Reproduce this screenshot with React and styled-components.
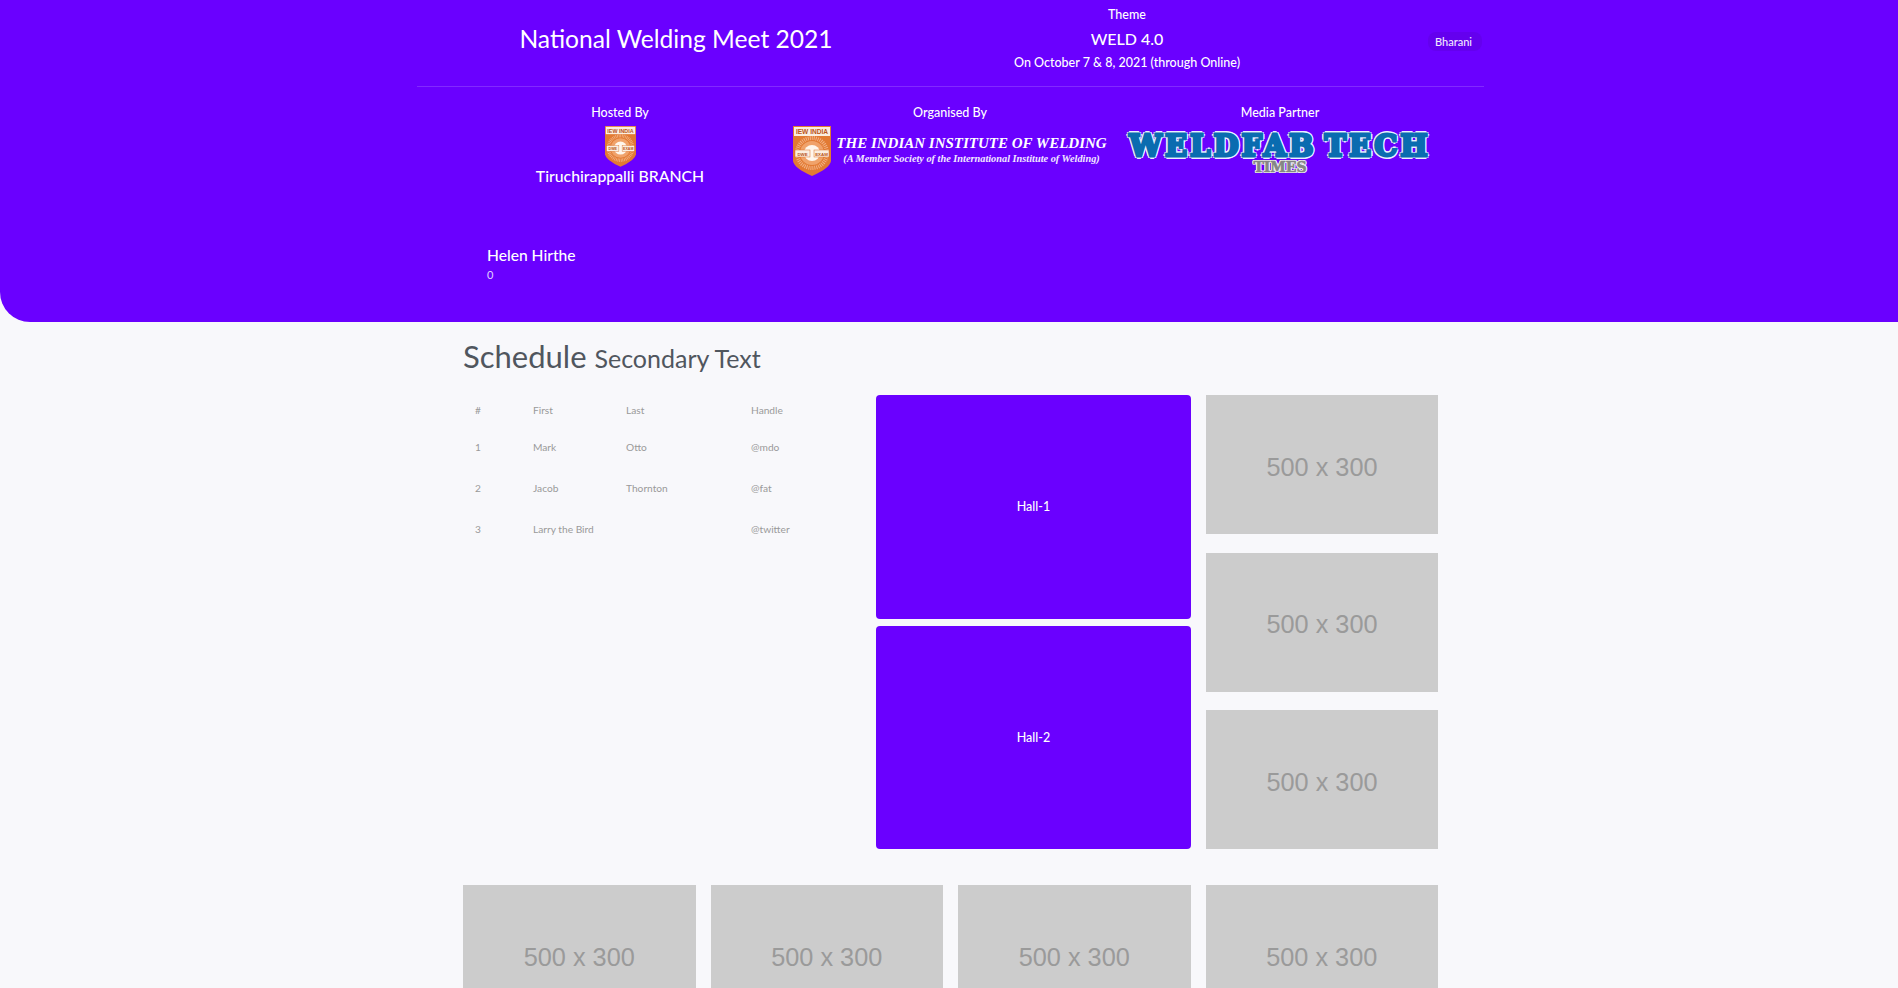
import React from 'react';
import styled, { createGlobalStyle } from 'styled-components';

const GlobalStyle = createGlobalStyle`
  html, body {
    margin: 0;
    padding: 0;
    background: #f8f8fb;
    font-family: "Lato", "Open Sans", sans-serif;
  }
  ::-webkit-scrollbar {
    display: none;
  }
`;

const Header = styled.header`
  height: 322px;
  box-sizing: border-box;
  background: #6a00ff;
  border-bottom-left-radius: 30px;
  color: #fff;
`;

const HeaderInner = styled.div`
  width: 1067px;
  margin-left: 417px;
`;

const TopRow = styled.div`
  display: grid;
  grid-template-columns: 518px 384px 1fr;
  align-items: center;
  height: 86px;
  box-sizing: content-box;
  border-bottom: 1px solid rgba(255, 255, 255, 0.16);
`;

const Title = styled.h1`
  margin: -9px 0 0;
  text-align: center;
  font-size: 24.6px;
  font-weight: 400;
`;

const Theme = styled.div`
  display: flex;
  flex-direction: column;
  align-items: center;
  gap: 6px;
  margin-top: -10px;
  font-size: 12.5px;
  line-height: 17px;
  font-weight: 500;
`;

const ThemeName = styled.div`
  font-size: 16px;
  line-height: 19px;
`;

const UserWrap = styled.div`
  display: flex;
  justify-content: flex-end;
  padding-right: 2px;
  margin-top: -3px;
`;

const UserPill = styled.div`
  padding: 2px 10px 2px 7px;
  border-radius: 8px;
  background: #6400ee;
  font-size: 11px;
  line-height: 15px;
  font-weight: 500;
  color: #f2e9ff;
`;

const SponsorRow = styled.div`
  display: grid;
  grid-template-columns: 406px 254px 406px;
  padding-top: 17px;
`;

const Sponsor = styled.div`
  display: flex;
  flex-direction: column;
  align-items: center;
  font-size: 12.5px;
  line-height: 17px;
  font-weight: 500;
`;

const Logo = styled.div`
  display: flex;
  align-items: flex-start;
  margin-top: 5px;
`;

const Branch = styled.div`
  font-size: 15.8px;
  line-height: 20px;
  margin-top: -1px;
`;

const InstituteText = styled.div`
  display: flex;
  flex-direction: column;
  align-items: center;
  padding: 8px 0 0 5px;
  font-family: "Liberation Serif", serif;
  font-style: italic;
  font-weight: 700;
  white-space: nowrap;
`;

const InstituteName = styled.div`
  font-size: 15px;
  line-height: 19px;
`;

const InstituteNote = styled.div`
  font-size: 10.3px;
  line-height: 12px;
  color: #f3e8ff;
`;

const Weldfab = styled.div`
  display: flex;
  flex-direction: column;
  align-items: center;
  margin-top: 5px;
  font-family: "DejaVu Serif", serif;
  font-weight: 700;
  white-space: nowrap;
`;

const WeldfabName = styled.div`
  font-size: 29px;
  line-height: 30px;
  color: #0a6cb0;
  letter-spacing: 3px;
  word-spacing: -5px;
  -webkit-text-stroke: 2.8px #0a6cb0;
  text-shadow: 2.8px 0 #e8f2ff, -2.8px 0 #e8f2ff, 0 2.8px #e8f2ff, 0 -2.8px #e8f2ff, 2px 2px #e8f2ff, -2px 2px #e8f2ff, 2px -2px #e8f2ff, -2px -2px #e8f2ff;
`;

const WeldfabTimes = styled.div`
  font-size: 14px;
  line-height: 12px;
  color: #858585;
  -webkit-text-stroke: 0.6px #858585;
  text-shadow: 1.2px 0 #f2f2f2, -1.2px 0 #f2f2f2, 0 1.2px #f2f2f2, 0 -1.2px #f2f2f2, 1px 1px #f2f2f2, -1px -1px #f2f2f2, 1px -1px #f2f2f2, -1px 1px #f2f2f2;
`;

const Person = styled.div`
  margin-top: 58px;
  padding-left: 70px;
`;

const PersonName = styled.div`
  font-size: 15.6px;
  line-height: 22px;
  font-weight: 500;
`;

const PersonCount = styled.div`
  font-size: 11px;
  line-height: 15px;
  margin-top: 1px;
  color: #e3d0ff;
`;

const Main = styled.main`
  width: 975px;
  margin-left: 463px;
  padding-top: 14px;
`;

const Heading = styled.h2`
  margin: 0 0 16px;
  font-size: 31px;
  line-height: 41px;
  font-weight: 400;
  color: #50565e;
`;

const HeadingNote = styled.small`
  font-size: 25px;
  font-weight: 400;
`;

const TopGrid = styled.div`
  display: grid;
  grid-template-columns: 398px 315px 232px;
  column-gap: 15px;
`;

const Table = styled.table`
  width: 100%;
  height: 154px;
  border-collapse: collapse;
  table-layout: fixed;
  font-size: 10.2px;
  color: #9a9a9a;
`;

const HeadCell = styled.th`
  width: ${(p) => p.$width || 'auto'};
  height: 32px;
  padding: 0 0 2px 12px;
  box-sizing: border-box;
  text-align: left;
  font-weight: 400;
`;

const Cell = styled.td`
  height: 40px;
  padding: 0 0 0 12px;
`;

const HallStack = styled.div`
  display: flex;
  flex-direction: column;
  gap: 7px;
`;

const Hall = styled.div`
  display: flex;
  align-items: center;
  justify-content: center;
  height: 223.5px;
  border-radius: 4px;
  background: #6a00ff;
  color: #fff;
  font-size: 12.5px;
  font-weight: 500;
`;

const PlaceholderStack = styled.div`
  display: flex;
  flex-direction: column;
  justify-content: space-between;
`;

const Placeholder = styled.div`
  display: flex;
  align-items: center;
  justify-content: center;
  height: 139px;
  box-sizing: border-box;
  padding-top: 5px;
  background: #ccc;
  color: #9a9a9a;
  font-family: "Liberation Sans", Arial, sans-serif;
  font-size: 25.3px;
`;

const BottomGrid = styled.div`
  display: grid;
  grid-template-columns: repeat(4, 1fr);
  column-gap: 15px;
  margin-top: 36px;
`;

// shield crest used in both the hosted by and the organised by logos
function Shield({ width }) {
  return (
    <svg width={width} height={(width * 50) / 38} viewBox="0 0 38 50">
      <path d="M0 0H38V35Q37 42 19 50Q1 42 0 35Z" fill="#e27a33" />
      <rect x="1" y="1" width="36" height="9" fill="#fbeee0" />
      <text x="19" y="8" textAnchor="middle" fontSize="6.6" fontWeight="700" fontFamily="Liberation Sans, sans-serif" fill="#b9541a">
        IEW INDIA
      </text>
      <circle cx="19" cy="27" r="15" fill="none" stroke="#f2b184" strokeWidth="4" strokeDasharray="1 1" />
      <circle cx="19" cy="27" r="12" fill="#f0a26a" />
      <circle cx="19" cy="27" r="8" fill="#fff6ec" />
      <rect x="2" y="24" width="15" height="7" fill="#fbeee0" stroke="#d96f2b" strokeWidth="0.5" />
      <rect x="21" y="24" width="15" height="7" fill="#fbeee0" stroke="#d96f2b" strokeWidth="0.5" />
      <text x="9.5" y="29.6" textAnchor="middle" fontSize="4.4" fontWeight="700" fontFamily="Liberation Sans, sans-serif" fill="#b9541a">
        DWE
      </text>
      <text x="28.5" y="29.6" textAnchor="middle" fontSize="4.4" fontWeight="700" fontFamily="Liberation Sans, sans-serif" fill="#b9541a">
        EXAM
      </text>
    </svg>
  );
}

const rows = [
  ['1', 'Mark', 'Otto', '@mdo'],
  ['2', 'Jacob', 'Thornton', '@fat'],
  ['3', 'Larry the Bird', '', '@twitter'],
];

export default function App() {
  return (
    <>
      <GlobalStyle />
      <Header>
        <HeaderInner>
          <TopRow>
            <Title>National Welding Meet 2021</Title>
            <Theme>
              <div>Theme</div>
              <ThemeName>WELD 4.0</ThemeName>
              <div>On October 7 &amp; 8, 2021 (through Online)</div>
            </Theme>
            <UserWrap>
              <UserPill>Bharani</UserPill>
            </UserWrap>
          </TopRow>
          <SponsorRow>
            <Sponsor>
              <div>Hosted By</div>
              <Logo>
                <Shield width={31} />
              </Logo>
              <Branch>Tiruchirappalli BRANCH</Branch>
            </Sponsor>
            <Sponsor>
              <div>Organised By</div>
              <Logo>
                <Shield width={38} />
                <InstituteText>
                  <InstituteName>THE INDIAN INSTITUTE OF WELDING</InstituteName>
                  <InstituteNote>(A Member Society of the International Institute of Welding)</InstituteNote>
                </InstituteText>
              </Logo>
            </Sponsor>
            <Sponsor>
              <div>Media Partner</div>
              <Logo>
                <Weldfab>
                  <WeldfabName>WELDFAB TECH</WeldfabName>
                  <WeldfabTimes>TIMES</WeldfabTimes>
                </Weldfab>
              </Logo>
            </Sponsor>
          </SponsorRow>
          <Person>
            <PersonName>Helen Hirthe</PersonName>
            <PersonCount>0</PersonCount>
          </Person>
        </HeaderInner>
      </Header>
      <Main>
        <Heading>
          Schedule <HeadingNote>Secondary Text</HeadingNote>
        </Heading>
        <TopGrid>
          <div>
            <Table>
              <thead>
                <tr>
                  <HeadCell $width="58px">#</HeadCell>
                  <HeadCell $width="93px">First</HeadCell>
                  <HeadCell $width="125px">Last</HeadCell>
                  <HeadCell>Handle</HeadCell>
                </tr>
              </thead>
              <tbody>
                {rows.map((row) => (
                  <tr key={row[0]}>
                    {row.map((value, i) => (
                      <Cell key={i}>{value}</Cell>
                    ))}
                  </tr>
                ))}
              </tbody>
            </Table>
          </div>
          <HallStack>
            <Hall>Hall-1</Hall>
            <Hall>Hall-2</Hall>
          </HallStack>
          <PlaceholderStack>
            <Placeholder>500 x 300</Placeholder>
            <Placeholder>500 x 300</Placeholder>
            <Placeholder>500 x 300</Placeholder>
          </PlaceholderStack>
        </TopGrid>
        <BottomGrid>
          <Placeholder>500 x 300</Placeholder>
          <Placeholder>500 x 300</Placeholder>
          <Placeholder>500 x 300</Placeholder>
          <Placeholder>500 x 300</Placeholder>
        </BottomGrid>
      </Main>
    </>
  );
}
